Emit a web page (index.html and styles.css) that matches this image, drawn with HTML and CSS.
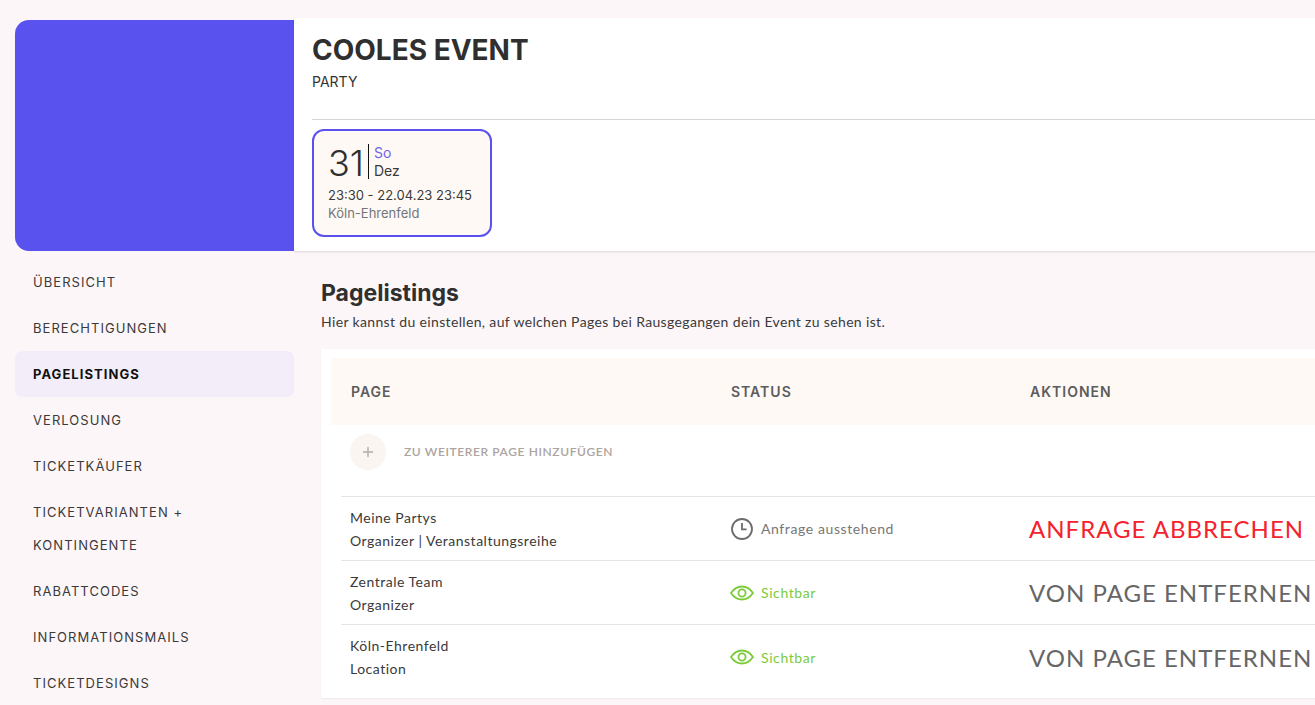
FILE: index.html
```html
<!DOCTYPE html>
<html lang="de">
<head>
<meta charset="utf-8">
<title>Pagelistings</title>
<link rel="stylesheet" href="styles.css">
</head>
<body>
<div class="page">
  <header class="hero">
    <div class="cover"></div>
    <div class="hero-info">
      <h1 class="title">COOLES EVENT</h1>
      <p class="subtitle">PARTY</p>
      <hr class="rule">
      <div class="date-card">
        <div class="date-top">
          <span class="day">31</span>
          <span class="date-parts"><span class="weekday">So</span><span class="month">Dez</span></span>
        </div>
        <div class="time">23:30 - 22.04.23 23:45</div>
        <div class="place">Köln-Ehrenfeld</div>
      </div>
    </div>
  </header>
  <div class="body-row">
    <nav class="side">
      <a class="nav-item">ÜBERSICHT</a>
      <a class="nav-item">BERECHTIGUNGEN</a>
      <a class="nav-item active">PAGELISTINGS</a>
      <a class="nav-item">VERLOSUNG</a>
      <a class="nav-item">TICKETKÄUFER</a>
      <a class="nav-item">TICKETVARIANTEN + KONTINGENTE</a>
      <a class="nav-item">RABATTCODES</a>
      <a class="nav-item">INFORMATIONSMAILS</a>
      <a class="nav-item">TICKETDESIGNS</a>
    </nav>
    <main class="content">
      <h2 class="heading">Pagelistings</h2>
      <p class="lead">Hier kannst du einstellen, auf welchen Pages bei Rausgegangen dein Event zu sehen ist.</p>
      <section class="panel">
        <div class="thead">
          <span>PAGE</span><span>STATUS</span><span>AKTIONEN</span>
        </div>
        <div class="add-row">
          <span class="add-btn"><svg width="12" height="12" viewBox="0 0 12 12"><path d="M6 1v10M1 6h10" stroke="#b5aca6" stroke-width="1.4" fill="none"/></svg></span>
          <span class="add-label">ZU WEITERER PAGE HINZUFÜGEN</span>
        </div>
        <div class="row">
          <div class="name">Meine Partys<br>Organizer | Veranstaltungsreihe</div>
          <div class="status pending">
            <svg width="24" height="24" viewBox="0 0 24 24" fill="none" stroke="#6b6b6b" stroke-width="1.8"><circle cx="12" cy="12" r="10"/><path d="M12 6v6.4h4.6"/></svg>
            Anfrage ausstehend
          </div>
          <div class="action danger">ANFRAGE ABBRECHEN</div>
        </div>
        <div class="row">
          <div class="name">Zentrale Team<br>Organizer</div>
          <div class="status visible">
            <svg width="24" height="24" viewBox="0 0 24 24" fill="none" stroke="#7ccb3a" stroke-width="1.8"><path d="M1 12C4 7.500 7.500 5.500 12 5.500S20 7.500 23 12C20 16.500 16.500 18.500 12 18.500S4 16.500 1 12Z"/><circle cx="12" cy="12" r="3.600"/></svg>
            Sichtbar
          </div>
          <div class="action">VON PAGE ENTFERNEN</div>
        </div>
        <div class="row">
          <div class="name">Köln-Ehrenfeld<br>Location</div>
          <div class="status visible">
            <svg width="24" height="24" viewBox="0 0 24 24" fill="none" stroke="#7ccb3a" stroke-width="1.8"><path d="M1 12C4 7.500 7.500 5.500 12 5.500S20 7.500 23 12C20 16.500 16.500 18.500 12 18.500S4 16.500 1 12Z"/><circle cx="12" cy="12" r="3.600"/></svg>
            Sichtbar
          </div>
          <div class="action">VON PAGE ENTFERNEN</div>
        </div>
      </section>
    </main>
  </div>
</div>
</body>
</html>
```
FILE: styles.css
```css
* { box-sizing: border-box; }
html, body { margin: 0; height: 705px; overflow: hidden; }
body { background: #fdf6f8; font-family: "Inter", sans-serif; color: #2f2f2f; }
.page { width: 1500px; padding: 20px 0 0 15px; }

.hero { display: flex; height: 231px; }
.cover { width: 279px; background: #5a52ee; border-radius: 14px 0 0 14px; }
.hero-info { flex: 1; background: #fff; margin-top: -2px; padding: 14px 18px 0; box-shadow: 0 1px 2px rgba(0,0,0,.12); }
.title { margin: 0; font-size: 28px; line-height: 36px; font-weight: 700; color: #2f2f2f; }
.subtitle { margin: 2px 0 0; font-size: 14px; line-height: 24px; color: #333; }
.rule { margin: 25px 0 9px; border: 0; border-top: 1px solid #d4d4d4; }
.date-card { width: 180px; height: 108px; border: 2px solid #5a52ee; border-radius: 12px; background: #fff9f5; padding: 13px 14px; }
.date-top { display: flex; height: 35px; }
.day { font-size: 36px; line-height: 38px; font-weight: 300; padding-right: 4px; border-right: 1px solid #111; height: 35px; }
.date-parts { display: flex; flex-direction: column; padding-left: 5px; font-size: 14px; line-height: 18px; }
.weekday { color: #6d66f0; }
.month { color: #3a3a3a; }
.time { margin-top: 7px; font-size: 13px; line-height: 18px; color: #3a3a3a; }
.place { font-size: 13px; line-height: 18px; color: #72767b; }

.body-row { display: flex; margin-top: 8px; }
.side { width: 279px; flex: none; }
.nav-item { display: block; padding: 6.5px 18px; font-size: 13px; line-height: 33px; letter-spacing: 1.05px; color: #3a3a3a; border-radius: 7px; }
.nav-item.active { background: #f3edf9; font-weight: 700; color: #111; }

.content { flex: 1; padding: 0 0 0 27px; }
.heading { margin: 17px 0 0; font-size: 23px; line-height: 34px; font-weight: 700; color: #2f2f2f; }
.lead { margin: 0; font-size: 14px; line-height: 24px; letter-spacing: .35px; font-family: "Lato", sans-serif; color: #3a3a3a; }
.panel { margin-top: 15px; width: 1100px; height: 349px; background: #fff; padding: 9px 0 0 10px; box-shadow: 0 1px 2px rgba(0,0,0,.06); }
.thead { display: grid; grid-template-columns: 380px 299px 1fr; align-items: center; height: 67px; padding-left: 20px; background: #fff9f5; font-size: 14px; font-weight: 600; letter-spacing: 1px; color: #5c5c5c; }
.add-row { display: flex; align-items: center; gap: 18px; height: 72px; margin-left: 10px; padding: 0 0 18px 9px; padding-top: 0; border-bottom: 1px solid #e5e5e5; }
.add-btn { display: flex; width: 36px; height: 36px; border-radius: 50%; background: #fbf5f1; align-items: center; justify-content: center; }
.add-label { font-size: 12px; font-weight: 600; letter-spacing: .6px; color: #aca49e; font-family: "Lato", sans-serif; }
.row { display: grid; grid-template-columns: 380px 299px 1fr; align-items: center; height: 64px; margin-left: 10px; padding-left: 9px; border-bottom: 1px solid #e5e5e5; font-family: "Lato", sans-serif; }
.row:last-child { border-bottom: 0; }
.name { font-size: 14px; line-height: 23px; letter-spacing: .5px; color: #3a3a3a; }
.status { display: flex; align-items: center; gap: 7px; font-size: 14px; letter-spacing: .6px; }
.pending { color: #777; }
.visible { color: #7ccb3a; }
.action { font-size: 24px; letter-spacing: 1px; color: #666; }
.danger { color: #f5222d; }
```
